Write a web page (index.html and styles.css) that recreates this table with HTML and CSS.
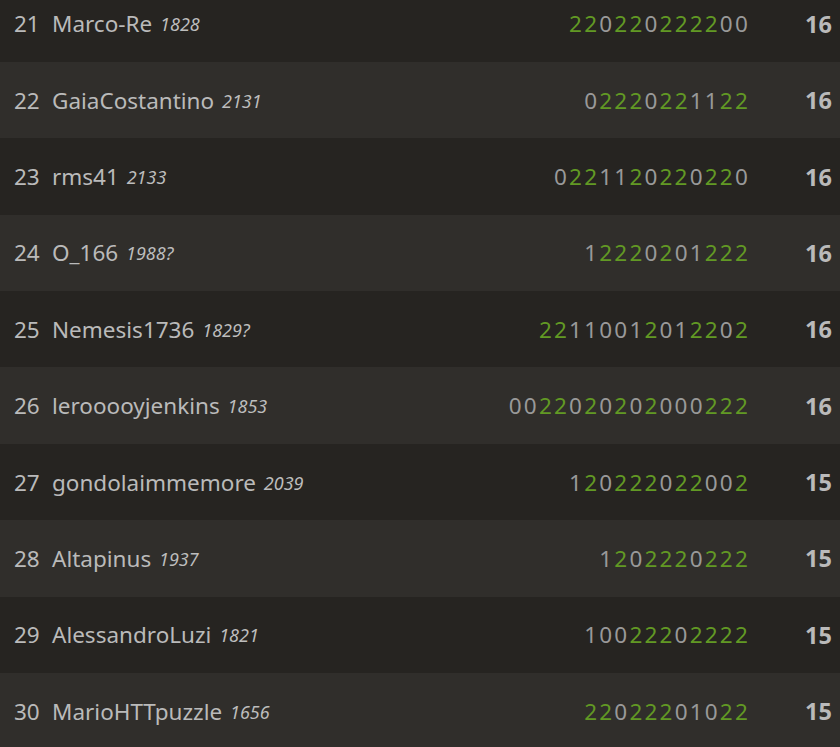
FILE: index.html
```html
<!DOCTYPE html>
<html lang="en">
<head>
    <meta charset="UTF-8">
    <meta name="viewport" content="width=device-width, initial-scale=1.0">
    <title>Arena standings</title>
    <link rel="stylesheet" href="styles.css">
</head>
<body>
    <div class="standings">
        <div class="row">
            <span class="rank">21</span>
            <span class="player">Marco-Re <em class="rating">1828</em></span>
            <span class="sheet"><b>2</b><b>2</b>0<b>2</b><b>2</b>0<b>2</b><b>2</b><b>2</b><b>2</b>00</span>
            <span class="total">16</span>
        </div>
        <div class="row">
            <span class="rank">22</span>
            <span class="player">GaiaCostantino <em class="rating">2131</em></span>
            <span class="sheet">0<b>2</b><b>2</b><b>2</b>0<b>2</b><b>2</b>11<b>2</b><b>2</b></span>
            <span class="total">16</span>
        </div>
        <div class="row">
            <span class="rank">23</span>
            <span class="player">rms41 <em class="rating">2133</em></span>
            <span class="sheet">0<b>2</b><b>2</b>11<b>2</b>0<b>2</b><b>2</b>0<b>2</b><b>2</b>0</span>
            <span class="total">16</span>
        </div>
        <div class="row">
            <span class="rank">24</span>
            <span class="player">O_166 <em class="rating">1988?</em></span>
            <span class="sheet">1<b>2</b><b>2</b><b>2</b>0<b>2</b>01<b>2</b><b>2</b><b>2</b></span>
            <span class="total">16</span>
        </div>
        <div class="row">
            <span class="rank">25</span>
            <span class="player">Nemesis1736 <em class="rating">1829?</em></span>
            <span class="sheet"><b>2</b><b>2</b>11001<b>2</b>01<b>2</b><b>2</b>0<b>2</b></span>
            <span class="total">16</span>
        </div>
        <div class="row">
            <span class="rank">26</span>
            <span class="player">lerooooyjenkins <em class="rating">1853</em></span>
            <span class="sheet">00<b>2</b><b>2</b>0<b>2</b>0<b>2</b>0<b>2</b>000<b>2</b><b>2</b><b>2</b></span>
            <span class="total">16</span>
        </div>
        <div class="row">
            <span class="rank">27</span>
            <span class="player">gondolaimmemore <em class="rating">2039</em></span>
            <span class="sheet">1<b>2</b>0<b>2</b><b>2</b><b>2</b>0<b>2</b><b>2</b>00<b>2</b></span>
            <span class="total">15</span>
        </div>
        <div class="row">
            <span class="rank">28</span>
            <span class="player">Altapinus <em class="rating">1937</em></span>
            <span class="sheet">1<b>2</b>0<b>2</b><b>2</b><b>2</b>0<b>2</b><b>2</b><b>2</b></span>
            <span class="total">15</span>
        </div>
        <div class="row">
            <span class="rank">29</span>
            <span class="player">AlessandroLuzi <em class="rating">1821</em></span>
            <span class="sheet">100<b>2</b><b>2</b><b>2</b>0<b>2</b><b>2</b><b>2</b><b>2</b></span>
            <span class="total">15</span>
        </div>
        <div class="row">
            <span class="rank">30</span>
            <span class="player">MarioHTTpuzzle <em class="rating">1656</em></span>
            <span class="sheet"><b>2</b><b>2</b>0<b>2</b><b>2</b><b>2</b>010<b>2</b><b>2</b></span>
            <span class="total">15</span>
        </div>
    </div>
</body>
</html>
```

FILE: styles.css
```css
body {
    margin: 0;
    background-color: #262421;
    font-family: "Noto Sans", sans-serif;
    color: #bababa;
    overflow: hidden;
}
.standings {
    margin-top: -14.4px;
}
.row {
    display: flex;
    align-items: center;
    height: 76.375px;
    font-size: 22.5px;
}
.row:nth-child(even) {
    background-color: #302e2b;
}
.rank {
    padding-left: 14px;
    width: 38px;
}
.player {
    flex: 1;
    white-space: nowrap;
}
.rating {
    font-size: 18px;
    margin-left: 2px;
    vertical-align: 1px;
    color: #bdbdbd;
}
.sheet {
    color: #999;
    letter-spacing: 2.2px;
}
.sheet b {
    font-weight: normal;
    color: #629924;
}
.total {
    width: 82px;
    padding-right: 8px;
    text-align: right;
    font-weight: bold;
    font-size: 23.5px;
}
```
